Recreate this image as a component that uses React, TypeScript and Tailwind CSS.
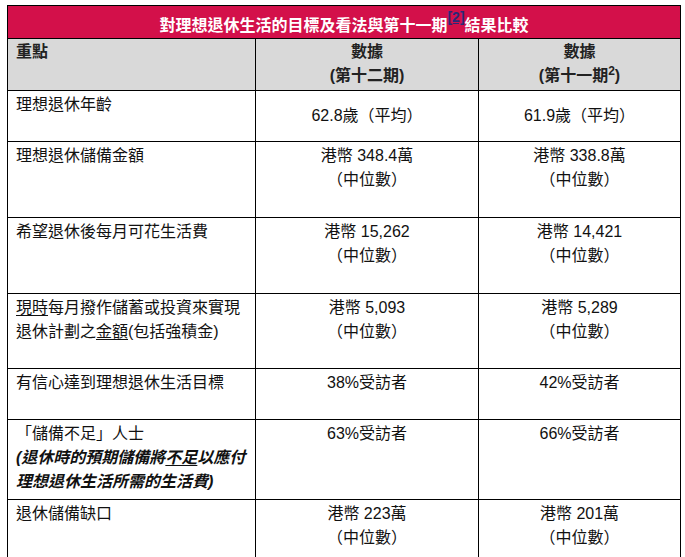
import React from "react";

type Row = {
  label: React.ReactNode;
  now: React.ReactNode;
  prev: React.ReactNode;
  height: string;
  valuePad?: string;
};

const median = (value: string) => (
  <>
    {value}
    <br />
    （中位數）
  </>
);

const rows: Row[] = [
  {
    label: "理想退休年齡",
    now: "62.8歲（平均）",
    prev: "61.9歲（平均）",
    height: "h-[51px]",
    valuePad: "pt-[13px]",
  },
  {
    label: "理想退休儲備金額",
    now: median("港幣 348.4萬"),
    prev: median("港幣 338.8萬"),
    height: "h-[76px]",
  },
  {
    label: "希望退休後每月可花生活費",
    now: median("港幣 15,262"),
    prev: median("港幣 14,421"),
    height: "h-[76px]",
  },
  {
    label: (
      <>
        <span className="underline underline-offset-2">現時</span>每月撥作儲蓄或投資來實現
        <br />
        退休計劃之<span className="underline underline-offset-2">金額</span>(包括強積金)
      </>
    ),
    now: median("港幣 5,093"),
    prev: median("港幣 5,289"),
    height: "h-[75px]",
  },
  {
    label: "有信心達到理想退休生活目標",
    now: "38%受訪者",
    prev: "42%受訪者",
    height: "h-[51px]",
  },
  {
    label: (
      <>
        「儲備不足」人士
        <br />
        <span className="font-bold italic whitespace-nowrap">
          (退休時的預期儲備將<span className="underline underline-offset-2">不足</span>以應付
        </span>
        <br />
        <span className="font-bold italic whitespace-nowrap">理想退休生活所需的生活費)</span>
      </>
    ),
    now: "63%受訪者",
    prev: "66%受訪者",
    height: "h-[80px]",
  },
  {
    label: "退休儲備缺口",
    now: median("港幣 223萬"),
    prev: median("港幣 201萬"),
    height: "h-[70px]",
  },
];

export default function App() {
  return (
    <div
      className="min-h-screen bg-white pt-[5px] pl-[7px] text-[16px] text-[#111]"
      style={{ fontFamily: '"Liberation Sans", "Noto Sans CJK TC", sans-serif' }}
    >
      <table className="w-[673px] table-fixed border-collapse">
        <colgroup>
          <col className="w-[248px]" />
          <col className="w-[223px]" />
          <col className="w-[202px]" />
        </colgroup>
        <tbody>
          {/* title bar */}
          <tr className="h-[33px]">
            <td
              colSpan={3}
              className="border border-black bg-[#d3104a] pt-[12px] pb-[3px] text-center align-top font-bold leading-[16px] text-white"
            >
              對理想退休生活的目標及看法與第十一期
              <span className="relative -top-[9px] text-[14px] leading-none text-[#2a2878] underline">
                [2]
              </span>
              結果比較
            </td>
          </tr>

          {/* column headings */}
          <tr className="h-[52px] bg-[#d9d9d9] font-bold text-[#222]">
            <td className="border border-black px-[8px] pt-[1px] align-top leading-[24px]">重點</td>
            <td className="border border-black pt-[1px] text-center align-top leading-[24px]">
              數據
              <br />
              (第十二期)
            </td>
            <td className="border border-black pt-[1px] text-center align-top leading-[24px]">
              數據
              <br />
              (第十一期
              <span className="relative -top-[6px] text-[12px] leading-none">2</span>)
            </td>
          </tr>

          {rows.map((row, i) => (
            <tr key={i} className={row.height}>
              <td className="border border-black px-[8px] pt-[2px] align-top leading-[24px]">
                {row.label}
              </td>
              <td
                className={`border border-black text-center align-top leading-[24px] ${row.valuePad ?? "pt-[2px]"}`}
              >
                {row.now}
              </td>
              <td
                className={`border border-black text-center align-top leading-[24px] ${row.valuePad ?? "pt-[2px]"}`}
              >
                {row.prev}
              </td>
            </tr>
          ))}
        </tbody>
      </table>
    </div>
  );
}
